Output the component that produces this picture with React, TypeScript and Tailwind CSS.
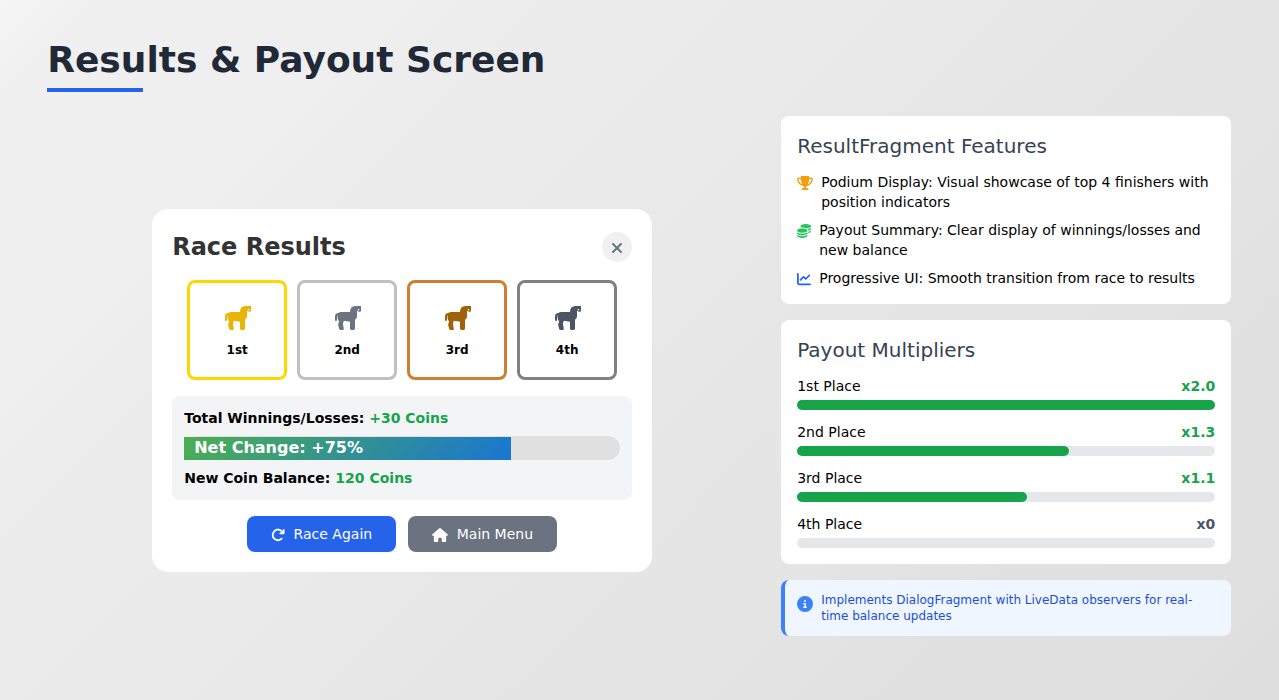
import React from "react";
import {
  FaXmark,
  FaArrowRotateRight,
  FaHouse,
  FaTrophy,
  FaCoins,
  FaChartLine,
  FaCircleInfo,
} from "react-icons/fa6";

const podium = [
  { label: "1st", border: "border-[#ffd700]", icon: "text-[#eab308]" },
  { label: "2nd", border: "border-[#c0c0c0]", icon: "text-[#6b7280]" },
  { label: "3rd", border: "border-[#cd7f32]", icon: "text-[#a16207]" },
  { label: "4th", border: "border-[#808080]", icon: "text-[#4b5563]" },
];

const payouts = [
  { place: "1st Place", value: "x2.0", color: "text-[#16a34a]", percent: 100 },
  { place: "2nd Place", value: "x1.3", color: "text-[#16a34a]", percent: 65 },
  { place: "3rd Place", value: "x1.1", color: "text-[#16a34a]", percent: 55 },
  { place: "4th Place", value: "x0", color: "text-[#4b5563]", percent: 0 },
];

function Horse({ className }: { className: string }) {
  return (
    <svg viewBox="0 0 26 24" fill="currentColor" fillRule="evenodd" className={className}>
      <path d="M20.5 0H26V4.6Q26 5.8 25 5.8H24.2Q23.4 5.8 23 5.2L22 4.4V10.5Q22 12.6 20 13.8V22.6Q20 24 18.6 24H16.4Q15 24 15 22.6V15.8L8.8 14.8Q8 17 8 18.4L8.8 22.4Q9 24 7.6 24H5.6Q4.4 24 4.1 22.8L3.2 19Q3 18 3.7 16.8L4.2 15.2Q2.5 13.8 2.5 11.2V9.2Q2 9.6 2 10.6V14Q2 15 1 15T0 14V10.6Q0 7.2 3.4 7Q4.4 6 6.4 6H15Q15 0 20.5 0ZM23.6 3A.8.8 0 1 0 23.6 4.6A.8.8 0 1 0 23.6 3Z" />
    </svg>
  );
}

function RaceResults() {
  return (
    <section className="w-[500px] rounded-2xl bg-white p-5">
      <header className="mb-[15px] flex h-9 items-center justify-between">
        <h2 className="text-2xl font-bold text-[#333333]">Race Results</h2>
        <button className="flex size-[30px] items-center justify-center rounded-full bg-[#f0f0f0] text-base text-[#6b7280]">
          <FaXmark className="mt-0.5" />
        </button>
      </header>
      <div className="mb-4 flex justify-center gap-2.5">
        {podium.map((p) => (
          <div
            key={p.label}
            className={`flex size-[100px] flex-col items-center justify-center rounded-lg border-[3px] pt-1 ${p.border}`}
          >
            <Horse className={`mb-3 ml-0.5 h-6 w-[26px] ${p.icon}`} />
            <span className="text-xs font-bold">{p.label}</span>
          </div>
        ))}
      </div>
      <div className="mb-4 rounded-lg bg-[#f3f4f6] p-3 text-sm font-bold">
        <p>
          Total Winnings/Losses: <span className="text-[#16a34a]">+30 Coins</span>
        </p>
        <div className="my-2 h-6 rounded-xl bg-[#e0e0e0] pt-px">
          <div className="h-[23px] w-3/4 bg-linear-[135deg,#4caf50,#1976d2] pl-2.5 text-base leading-[22px] text-white">
            Net Change: +75%
          </div>
        </div>
        <p>
          New Coin Balance: <span className="text-[#16a34a]">120 Coins</span>
        </p>
      </div>
      <div className="flex justify-center gap-3 text-sm text-white">
        <button className="flex h-9 w-[149px] items-center justify-center gap-[8.4px] rounded-lg bg-[#2563eb]">
          <FaArrowRotateRight className="mt-px size-3.5" />
          Race Again
        </button>
        <button className="flex h-9 w-[149px] items-center justify-center gap-[8.4px] rounded-lg bg-[#6b7280]">
          <FaHouse className="mt-px h-3.5 w-4" />
          Main Menu
        </button>
      </div>
    </section>
  );
}

function Features() {
  return (
    <section className="rounded-lg bg-white p-4">
      <h3 className="mb-3 text-xl text-[#374151]">ResultFragment Features</h3>
      <ul className="flex flex-col gap-2 text-sm">
        <li className="flex gap-2">
          <FaTrophy className="mt-1 h-3.5 w-4 shrink-0 text-[#f59e0b]" />
          <span>Podium Display: Visual showcase of top 4 finishers with position indicators</span>
        </li>
        <li className="flex gap-2">
          <FaCoins className="mt-1 size-3.5 shrink-0 text-[#22c55e]" />
          <span>Payout Summary: Clear display of winnings/losses and new balance</span>
        </li>
        <li className="flex gap-2">
          <FaChartLine className="mt-1 size-3.5 shrink-0 text-[#2563eb]" />
          <span>Progressive UI: Smooth transition from race to results</span>
        </li>
      </ul>
    </section>
  );
}

function Multipliers() {
  return (
    <section className="rounded-lg bg-white p-4">
      <h3 className="mb-3 text-xl text-[#374151]">Payout Multipliers</h3>
      <div className="flex flex-col gap-3">
        {payouts.map((p) => (
          <div key={p.place}>
            <div className="mb-1 flex justify-between text-sm">
              <span>{p.place}</span>
              <span className={`font-bold ${p.color}`}>{p.value}</span>
            </div>
            <div className="h-2.5 rounded-full bg-[#e5e7eb]">
              <div className="h-full rounded-full bg-[#16a34a]" style={{ width: `${p.percent}%` }} />
            </div>
          </div>
        ))}
      </div>
    </section>
  );
}

export default function App() {
  return (
    <main className="flex h-[700px] w-full flex-col overflow-hidden bg-linear-[135deg,#f5f5f5_0%,#f0f0f0_5%,#efefef_19%,#ebebeb_32%,#eaeaea_43%,#e6e6e6_56%,#e5e5e5_67%,#e1e1e1_80%,#e0e0e0_93%,#dddddd_100%] pt-10 pr-[47.8px] pb-[35px] pl-[47.2px] font-['DejaVu_Sans',sans-serif] text-black">
      <h1 className="text-4xl font-bold text-[#1f2937]">Results &amp; Payout Screen</h1>
      <div className="mt-2 mb-6 h-1 w-24 shrink-0 bg-[#2563eb]" />
      <div className="flex min-h-0 flex-1 gap-6">
        <div className="flex flex-1 items-center justify-center">
          <RaceResults />
        </div>
        <aside className="flex w-[450px] flex-col gap-4">
          <Features />
          <Multipliers />
          <div className="flex gap-2 rounded-lg border-l-4 border-[#3b82f6] bg-[#eff6ff] p-3 text-xs text-[#1d4ed8]">
            <FaCircleInfo className="mt-1 size-4 shrink-0 text-[#3b82f6]" />
            <p>Implements DialogFragment with LiveData observers for real-time balance updates</p>
          </div>
        </aside>
      </div>
    </main>
  );
}
